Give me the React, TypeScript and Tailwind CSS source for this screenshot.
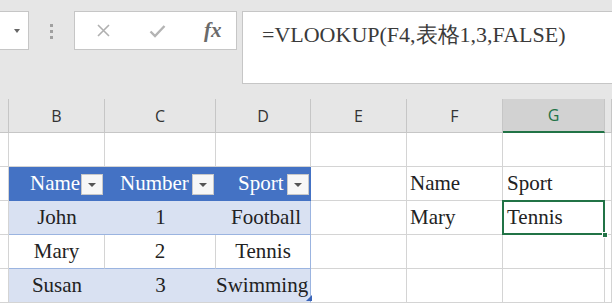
const cols = [
    { key: "A", w: "w-[9px]" },
    { key: "B", w: "w-[96px]" },
    { key: "C", w: "w-[111px]" },
    { key: "D", w: "w-[95px]" },
    { key: "E", w: "w-[96px]" },
    { key: "F", w: "w-[96px]" },
    { key: "G", w: "w-[102px]" },
    { key: "H", w: "flex-1" },
];

const formula = "=VLOOKUP(F4,\u8868\u683c1,3,FALSE)";

function FilterButton() {
    return (
        <span className="absolute right-[2px] top-[7px] flex h-[21px] w-[22px] items-center justify-center border border-[#c8c8c8] bg-[#f7f7f7]">
            <span className="h-0 w-0 border-x-[4px] border-t-[4px] border-x-transparent border-t-[#555]" />
        </span>
    );
}

export default function App() {
    const cell = "h-[34px] shrink-0 border-r border-b border-[#d4d4d4] font-[Liberation_Serif,serif]!";

    return (
        <main className="h-[306px] w-[612px] overflow-hidden bg-white font-[Liberation_Serif,serif]!">
            {/* Formula bar */}
            <div className="flex h-[99px] items-start bg-[#e6e6e6] pt-[11px]">
                <div className="flex h-[39px] w-[29px] items-center justify-end border border-l-0 border-[#c6c6c6] bg-white pr-[8px]">
                    <span className="h-0 w-0 border-x-[3px] border-t-[4px] border-x-transparent border-t-[#666]" />
                </div>
                <div className="ml-[21px] mt-[13px] flex flex-col gap-[3px]">
                    <span className="h-[3px] w-[3px] bg-[#a0a0a0]" />
                    <span className="h-[3px] w-[3px] bg-[#a0a0a0]" />
                    <span className="h-[3px] w-[3px] bg-[#a0a0a0]" />
                </div>
                <div className="ml-[21px] flex h-[39px] w-[163px] items-center border border-[#c6c6c6] bg-white">
                    <svg className="ml-[21px]" width="15" height="15" viewBox="0 0 15 15">
                        <path d="M2 2 L13 13 M13 2 L2 13" stroke="#b0b0b0" strokeWidth="1.6" fill="none" />
                    </svg>
                    <svg className="ml-[38px]" width="17" height="14" viewBox="0 0 17 14">
                        <path d="M1.5 7.5 L6 12 L15.5 2" stroke="#b4b4b4" strokeWidth="2.4" fill="none" />
                    </svg>
                    <span className="ml-[38px] text-[21px] italic font-bold text-[#6a6a6a] font-[Liberation_Serif,serif]!">fx</span>
                </div>
                <div className="ml-[5px] h-[73px] flex-1 border border-r-0 border-[#c6c6c6] bg-white pl-[19px] pt-[6px]">
                    <span className="text-[22px] text-[#3a3a3a] font-[Liberation_Serif,serif]!">{formula}</span>
                </div>
            </div>

            {/* Column headers */}
            <div className="flex h-[34px] bg-[#e6e6e6] text-[16px] text-[#333]">
                {cols.map((c) =>
                    c.key === "G" ? (
                        <div key={c.key} className={c.w + " flex shrink-0 items-center justify-center border-r border-b-2 border-r-[#c6c6c6] border-b-[#217346] bg-[#d2d2d2] text-[#217346] font-[Open_Sans,sans-serif]!"}>
                            {c.key}
                        </div>
                    ) : (
                        <div key={c.key} className={c.w + " flex shrink-0 items-center justify-center border-r border-b border-[#c6c6c6] font-[Open_Sans,sans-serif]!"}>
                            {c.key === "A" || c.key === "H" ? "" : c.key}
                        </div>
                    )
                )}
            </div>

            {/* Grid */}
            <div className="text-[21px] text-[#222] font-[Liberation_Serif,serif]!">
                {/* row 2 */}
                <div className="flex">
                    {cols.map((c) => (
                        <div key={c.key} className={c.w + " " + cell} />
                    ))}
                </div>

                {/* row 3: table header */}
                <div className="flex">
                    <div className={"w-[9px] " + cell} />
                    <div className="relative flex h-[34px] w-[96px] shrink-0 items-center overflow-hidden bg-[#4472c4] pl-[21px] text-white font-[Liberation_Serif,serif]!">
                        Name
                        <FilterButton />
                    </div>
                    <div className="relative flex h-[34px] w-[111px] shrink-0 items-center overflow-hidden bg-[#4472c4] pl-[15px] text-white font-[Liberation_Serif,serif]!">
                        Number
                        <FilterButton />
                    </div>
                    <div className="relative flex h-[34px] w-[95px] shrink-0 items-center overflow-hidden bg-[#4472c4] pl-[22px] text-white font-[Liberation_Serif,serif]!">
                        Sport
                        <FilterButton />
                    </div>
                    <div className={"w-[96px] " + cell} />
                    <div className={"w-[96px] flex items-center pl-[3px] " + cell}>Name</div>
                    <div className={"w-[102px] flex items-center pl-[4px] " + cell}>Sport</div>
                    <div className={"flex-1 " + cell} />
                </div>

                {/* row 4 */}
                <div className="flex">
                    <div className={"w-[9px] " + cell} />
                    <div className="flex h-[34px] w-[96px] shrink-0 items-center justify-center border-b border-[#9bb4e0] bg-[#d9e1f2] font-[Liberation_Serif,serif]!">John</div>
                    <div className="flex h-[34px] w-[111px] shrink-0 items-center justify-center border-b border-[#9bb4e0] bg-[#d9e1f2] font-[Liberation_Serif,serif]!">1</div>
                    <div className="flex h-[34px] w-[95px] shrink-0 items-center justify-end border-r border-b border-[#9bb4e0] bg-[#d9e1f2] pr-[9px] font-[Liberation_Serif,serif]!">Football</div>
                    <div className={"w-[96px] " + cell} />
                    <div className={"w-[96px] flex items-center pl-[3px] " + cell}>Mary</div>
                    <div className={"relative w-[102px] flex items-center pl-[4px] " + cell}>
                        Tennis
                        <span className="absolute -left-px -top-px h-[35px] w-[103px] border-2 border-[#217346]" />
                        <span className="absolute -bottom-[4px] -right-[4px] h-[6px] w-[6px] border border-white bg-[#217346]" />
                    </div>
                    <div className={"flex-1 " + cell} />
                </div>

                {/* row 5 */}
                <div className="flex">
                    <div className={"w-[9px] " + cell} />
                    <div className="flex h-[34px] w-[96px] shrink-0 items-center justify-center border-r border-b border-r-[#d4d4d4] border-b-[#9bb4e0] font-[Liberation_Serif,serif]!">Mary</div>
                    <div className="flex h-[34px] w-[111px] shrink-0 items-center justify-center border-r border-b border-r-[#d4d4d4] border-b-[#9bb4e0] font-[Liberation_Serif,serif]!">2</div>
                    <div className="flex h-[34px] w-[95px] shrink-0 items-center justify-center border-r border-b border-[#9bb4e0] font-[Liberation_Serif,serif]!">Tennis</div>
                    <div className={"w-[96px] " + cell} />
                    <div className={"w-[96px] " + cell} />
                    <div className={"w-[102px] " + cell} />
                    <div className={"flex-1 " + cell} />
                </div>

                {/* row 6 */}
                <div className="flex">
                    <div className={"w-[9px] " + cell} />
                    <div className="flex h-[34px] w-[96px] shrink-0 items-center justify-center border-b border-[#d4d4d4] bg-[#d9e1f2] font-[Liberation_Serif,serif]!">Susan</div>
                    <div className="flex h-[34px] w-[111px] shrink-0 items-center justify-center border-b border-[#d4d4d4] bg-[#d9e1f2] font-[Liberation_Serif,serif]!">3</div>
                    <div className="relative flex h-[34px] w-[95px] shrink-0 items-center whitespace-nowrap border-r border-b border-r-[#9bb4e0] border-b-[#d4d4d4] bg-[#d9e1f2] font-[Liberation_Serif,serif]!">
                        Swimming
                        <span className="absolute -right-[2px] bottom-[1px] h-0 w-0 border-[3px] border-l-transparent border-t-transparent border-b-[#3a64b8] border-r-[#3a64b8]" />
                    </div>
                    <div className={"w-[96px] " + cell} />
                    <div className={"w-[96px] " + cell} />
                    <div className={"w-[102px] " + cell} />
                    <div className={"flex-1 " + cell} />
                </div>
            </div>
        </main>
    );
}
